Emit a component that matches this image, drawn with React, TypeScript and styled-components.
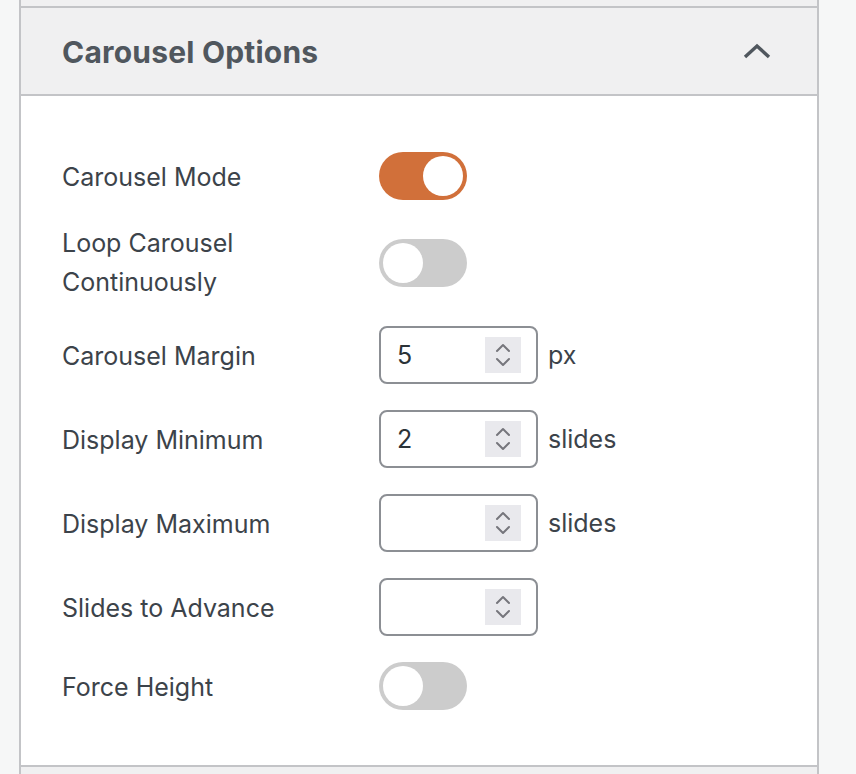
import styled, { createGlobalStyle } from "styled-components";

const GlobalStyle = createGlobalStyle`
  html, body {
    margin: 0;
    padding: 0;
    background: #f6f7f7;
  }
  body {
    font-family: Inter, "Noto Sans", "Liberation Sans", sans-serif;
    color: #3c434a;
  }
`;

const Page = styled.div`
  width: 856px;
  height: 774px;
  overflow: hidden;
  padding-left: 19px;
  box-sizing: border-box;
`;

const Stack = styled.div`
  width: 800px;
  display: flex;
  flex-direction: column;
`;

const Sliver = styled.div<{ $h: number }>`
  height: ${(p) => p.$h}px;
  background: #f0f0f1;
  border-left: 2px solid #c3c4c7;
  border-right: 2px solid #c3c4c7;
`;

const Panel = styled.section`
  border: 2px solid #c3c4c7;
  background: #fff;
`;

const Header = styled.div`
  height: 86px;
  background: #f0f0f1;
  border-bottom: 2px solid #c3c4c7;
  display: flex;
  align-items: center;
  justify-content: space-between;
  padding: 0 46px 0 41px;
`;

const Title = styled.h2`
  margin: 0 0 0 0;
  padding-top: 2px;
  font-size: 30px;
  font-weight: 700;
  color: #50575e;
  letter-spacing: 0.2px;
`;

const Body = styled.div`
  padding: 56px 41px 55px;
  display: flex;
  flex-direction: column;
  gap: 26px;
`;

const Row = styled.div`
  display: flex;
  align-items: center;
`;

const Label = styled.div<{ $lines?: number }>`
  width: 317px;
  flex-shrink: 0;
  font-size: 25px;
  line-height: ${(p) => (p.$lines ? "39px" : "37px")};
  margin: ${(p) => (p.$lines ? "-2px 0" : "2px 0 0")};
  color: #3c434a;
`;

const Control = styled.div`
  display: flex;
  align-items: center;
  gap: 10px;
`;

const Track = styled.div<{ $on: boolean }>`
  width: 88px;
  height: 48px;
  border-radius: 24px;
  box-sizing: border-box;
  padding: 4px;
  background: ${(p) => (p.$on ? "#d1703a" : "#cccccc")};
  display: flex;
  justify-content: ${(p) => (p.$on ? "flex-end" : "flex-start")};
`;

const Knob = styled.div`
  width: 40px;
  height: 40px;
  border-radius: 50%;
  background: #fff;
`;

const NumberBox = styled.div`
  width: 159px;
  height: 58px;
  box-sizing: border-box;
  border: 2px solid #8c8f94;
  border-radius: 8px;
  display: flex;
  align-items: center;
  padding: 0 15px 0 16px;
`;

const Value = styled.span`
  flex: 1;
  font-size: 25px;
  color: #2c3338;
`;

const Spinner = styled.div`
  width: 36px;
  height: 36px;
  background: #e9e9ed;
  display: flex;
  align-items: center;
  justify-content: center;
`;

const Suffix = styled.span`
  font-size: 25px;
  color: #3c434a;
`;

const Toggle = ({ on }: { on: boolean }) => (
  <Track $on={on}>
    <Knob />
  </Track>
);

const NumberField = ({ value }: { value?: string }) => (
  <NumberBox>
    <Value>{value ?? ""}</Value>
    <Spinner>
      <svg width="18" height="28" viewBox="0 0 18 28" fill="none">
        <path d="M3 10 L9 4 L15 10" stroke="#76767c" strokeWidth="2" strokeLinecap="round" strokeLinejoin="round" />
        <path d="M3 18 L9 24 L15 18" stroke="#76767c" strokeWidth="2" strokeLinecap="round" strokeLinejoin="round" />
      </svg>
    </Spinner>
  </NumberBox>
);

const Chevron = () => (
  <svg width="28" height="16" viewBox="0 0 28 16" fill="none">
    <path d="M2 14 L14 3 L26 14" stroke="#50575e" strokeWidth="3.4" />
  </svg>
);

export default function App() {
  return (
    <Page>
      <GlobalStyle />
      <Stack>
        <Sliver $h={6} />
        <Panel>
          <Header>
            <Title>Carousel Options</Title>
            <Chevron />
          </Header>
          <Body>
            <Row>
              <Label>Carousel Mode</Label>
              <Control>
                <Toggle on />
              </Control>
            </Row>
            <Row>
              <Label $lines={2}>
                Loop Carousel
                <br />
                Continuously
              </Label>
              <Control>
                <Toggle on={false} />
              </Control>
            </Row>
            <Row>
              <Label>Carousel Margin</Label>
              <Control>
                <NumberField value="5" />
                <Suffix>px</Suffix>
              </Control>
            </Row>
            <Row>
              <Label>Display Minimum</Label>
              <Control>
                <NumberField value="2" />
                <Suffix>slides</Suffix>
              </Control>
            </Row>
            <Row>
              <Label>Display Maximum</Label>
              <Control>
                <NumberField />
                <Suffix>slides</Suffix>
              </Control>
            </Row>
            <Row>
              <Label>Slides to Advance</Label>
              <Control>
                <NumberField />
              </Control>
            </Row>
            <Row>
              <Label>Force Height</Label>
              <Control>
                <Toggle on={false} />
              </Control>
            </Row>
          </Body>
        </Panel>
        <Sliver $h={20} />
      </Stack>
    </Page>
  );
}
